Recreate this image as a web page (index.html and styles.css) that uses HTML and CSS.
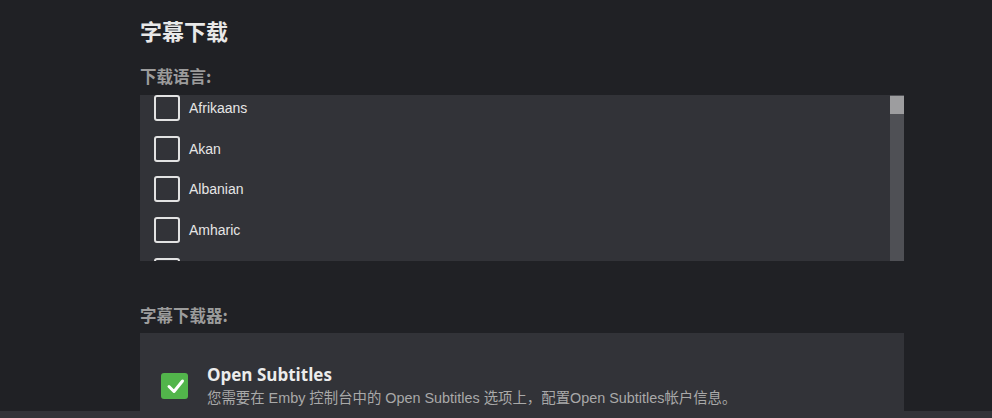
FILE: index.html
```html
<!DOCTYPE html>
<html lang="zh-CN">
<head>
<meta charset="utf-8">
<title>字幕下载</title>
<link rel="stylesheet" href="styles.css">
</head>
<body>
<main class="page">
  <h2 class="title">字幕下载</h2>
  <div class="label">下载语言:</div>
  <div class="listbox">
    <div class="list">
      <div class="list-inner">
        <label class="row"><span class="box"></span><span class="name">Afrikaans</span></label>
        <label class="row"><span class="box"></span><span class="name">Akan</span></label>
        <label class="row"><span class="box"></span><span class="name">Albanian</span></label>
        <label class="row"><span class="box"></span><span class="name">Amharic</span></label>
        <label class="row"><span class="box"></span></label>
      </div>
    </div>
    <div class="scrollbar"><div class="thumb"></div></div>
  </div>
  <div class="label label-2">字幕下载器:</div>
  <div class="panel">
    <div class="provider">
      <span class="check">
        <svg viewBox="0 0 26 26" width="26" height="26"><path d="M7 13.5 L12 18.5 L20.5 8" fill="none" stroke="#fff" stroke-width="3" stroke-linecap="round" stroke-linejoin="round"/></svg>
      </span>
      <div class="provider-text">
        <div class="provider-name">Open Subtitles</div>
        <div class="provider-desc">您需要在 Emby 控制台中的 Open Subtitles 选项上，配置Open Subtitles帐户信息。</div>
      </div>
    </div>
  </div>
</main>
<div class="bottombar"></div>
</body>
</html>
```
FILE: styles.css
```css
html, body {
  margin: 0;
  padding: 0;
  background: #202125;
  height: 100%;
  overflow: hidden;
}
body {
  font-family: "Liberation Sans", "Noto Sans CJK SC", sans-serif;
  color: #e3e3e3;
}
.page {
  width: 764px;
  margin-left: 140px;
  padding-top: 15px;
}
.title {
  margin: 0;
  font-family: "Noto Sans CJK SC", sans-serif;
  font-size: 22px;
  font-weight: 700;
  line-height: 30px;
  color: #e8e8e8;
}
.label {
  margin-top: 21px;
  font-family: "Noto Sans CJK SC", sans-serif;
  font-size: 16.5px;
  font-weight: 700;
  line-height: 20px;
  color: #9c9c9c;
}
.label-2 {
  margin-top: 44px;
}
.listbox {
  margin-top: 9px;
  height: 166px;
  display: flex;
  background: #323338;
}
.list {
  flex: 1;
  overflow: hidden;
}
.list-inner {
  margin-top: -7.5px;
  display: flex;
  flex-direction: column;
}
.row {
  height: 40.8px;
  display: flex;
  align-items: center;
  padding-left: 14px;
  gap: 9px;
}
.box {
  width: 26px;
  height: 26px;
  box-sizing: border-box;
  border: 2px solid #e2e2e2;
  border-radius: 3px;
}
.name {
  font-size: 14px;
  color: #e6e6e6;
}
.scrollbar {
  width: 14px;
  background: #4f5055;
  display: flex;
  flex-direction: column;
}
.thumb {
  height: 18px;
  margin-top: 1px;
  background: #9d9d9f;
}
.panel {
  margin-top: 8px;
  height: 120px;
  background: #323338;
  padding-top: 30px;
  box-sizing: border-box;
}
.provider {
  display: flex;
  align-items: center;
  padding-left: 21px;
  gap: 19px;
}
.check {
  width: 27px;
  height: 26px;
  border-radius: 3px;
  background: #52b54b;
  display: flex;
  align-items: center;
  justify-content: center;
}
.check svg {
  display: block;
}
.provider-name {
  font-family: "Open Sans", "Noto Sans CJK SC", sans-serif;
  font-size: 17px;
  font-weight: 700;
  line-height: 24px;
  color: #ececec;
}
.provider-desc {
  font-size: 14.4px;
  line-height: 22px;
  color: #a9a9a9;
}
.bottombar {
  position: fixed;
  left: 0;
  right: 0;
  bottom: 0;
  height: 7px;
  background: #323338;
}
```
